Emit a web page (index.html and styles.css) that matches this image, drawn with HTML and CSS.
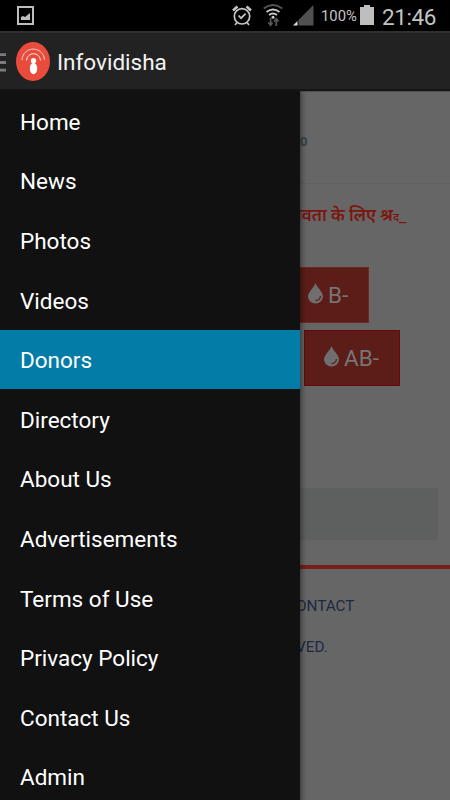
FILE: index.html
```html
<!DOCTYPE html>
<html lang="en">
<head>
<meta charset="utf-8">
<title>Infovidisha</title>
<link rel="stylesheet" href="styles.css">
</head>
<body>
<div class="status">
  <svg class="picture" width="17" height="19" viewBox="0 0 17 19"><path d="M1 1h15v17H1z" fill="none" stroke="#bcbebc" stroke-width="2"/><path d="M4 14v-3l2-1 2 1 5-4v7z" fill="#bcbebc"/></svg>
  <svg class="alarm" width="20" height="21" viewBox="0 0 20 21" fill="none" stroke="#c6c6c6" stroke-width="1.7"><circle cx="10" cy="11.300" r="7.700"/><path d="M1 5.500l4.500-4M19 5.500l-4.500-4" stroke-width="2.600"/><path d="M6.500 10.500l2.600 2.700 4.500-4.500M5 17.500l-2 2.500M15 17.500l2 2.500"/></svg>
  <svg class="wifi" width="20" height="23" viewBox="0 0 20 23" fill="none" stroke="#c6c6c6" stroke-width="1.900"><path d="M.7 4.500Q10-2.500 19.300 4.500" stroke="#555"/><path d="M3.500 8q6.500-5 13 0M6 11q4-3.200 8 0"/><circle cx="10" cy="13.200" r="1.500" fill="#ccc" stroke="none"/><path d="M7.600 14v7M5.300 18.500l2.300 2.800 1.900-2.800M13.300 22v-7M11 17.500l2.300-2.800 2.300 2.800" stroke="#555" stroke-width="1.800"/></svg>
  <svg class="signal" width="21" height="21" viewBox="0 0 21 21"><path d="M20.500 0v20.500h-15V15z" fill="#505050"/><path d="M4.500 16v4.500H0z" fill="#ddd"/></svg>
  <span class="percent">100%</span>
  <svg class="battery" width="14" height="20" viewBox="0 0 14 20"><path d="M0 2h4V0h6v2h4v18H0z" fill="#bebebe"/></svg>
  <span class="clock">21:46</span>
</div>
<header class="bar">
  <svg class="burger" width="6" height="19" viewBox="0 0 6 19"><path d="M0 1.700h6M0 9.500h6M0 17.200h6" stroke="#7c7c7c" stroke-width="2.800"/></svg>
  <svg class="logo" width="34" height="39" viewBox="0 0 34 39"><ellipse cx="17" cy="19.500" rx="17" ry="19.500" fill="#e94b3c"/><g fill="none" stroke="#fff" stroke-width=".9"><path d="M6 18C7 3.500 27.500 3.500 28.500 18" opacity=".8"/><path d="M10.500 18.500C11.500 9.500 23.500 9.500 24.500 18.500"/></g><circle cx="17.500" cy="18.700" r="2.700" fill="#fff"/><ellipse cx="17.500" cy="26.500" rx="3.700" ry="5.700" fill="#fff"/></svg>
  <h1>Infovidisha</h1>
</header>
<main class="stage">
  <div class="page">
    <div class="top"><b>0</b></div>
    <div class="ticker"><span>मानवता के लिए श्र<span class="typing">द</span></span><span class="caret">_</span></div>
    <div class="groups">
      <div class="group first"><svg width="15" height="21" viewBox="0 0 15 21"><path d="M7.500 0C6.500 4 0 9 0 13.500a7.500 7.100 0 0 0 15 0C15 9 8.500 4 7.500 0z" fill="#6f6f6f"/><path d="M12.500 13q-.5 4.500-5 4.500" fill="none" stroke="#5c1d18" stroke-width="1.300"/></svg><span>B-</span></div>
      <div class="group second"><svg width="15" height="21" viewBox="0 0 15 21"><path d="M7.500 0C6.500 4 0 9 0 13.500a7.500 7.100 0 0 0 15 0C15 9 8.500 4 7.500 0z" fill="#6f6f6f"/><path d="M12.500 13q-.5 4.500-5 4.500" fill="none" stroke="#5c1d18" stroke-width="1.300"/></svg><span>AB-</span></div>
    </div>
    <div class="panel"></div>
    <footer><p>CONTACT</p><p class="rights">VED.</p></footer>
  </div>
  <nav class="drawer">
    <a>Home</a><a>News</a><a>Photos</a><a>Videos</a><a class="active">Donors</a><a>Directory</a><a>About Us</a><a>Advertisements</a><a>Terms of Use</a><a>Privacy Policy</a><a>Contact Us</a><a>Admin</a>
  </nav>
</main>
</body>
</html>
```
FILE: styles.css
```css
* { box-sizing: border-box; }
body { margin: 0; width: 450px; height: 800px; overflow: hidden; display: flex; flex-direction: column; background: #000; font-family: Roboto, "Noto Sans", sans-serif; }
svg { display: block; flex: none; }
.status { flex: none; height: 31px; display: flex; align-items: flex-start; color: #c4c4c4; white-space: nowrap; }
.picture { margin: 6px 0 0 17px; }
.alarm { margin: 5px 0 0 198px; }
.wifi { margin: 4px 0 0 11px; }
.signal { margin: 5px 0 0 10px; }
.percent { width: 36px; margin: 7px 0 0 7px; font-size: 14.800px; line-height: 19px; }
.battery { margin: 5px 0 0 3px; }
.clock { margin: 3px 0 0 8px; font-size: 22.500px; letter-spacing: -.4px; line-height: 28px; }
.bar { flex: none; height: 60px; display: flex; align-items: flex-start; background: #222; border-top: 2px solid #303030; border-bottom: 2px solid #151515; }
.burger { margin-top: 20px; }
.logo { margin: 9px 0 0 10px; }
h1 { margin: 14px 0 0 7px; font-size: 22.500px; line-height: 30px; font-weight: 400; color: #f3f3f3; }
.stage { flex: 1; position: relative; overflow: hidden; }
.page { height: 100%; background: #666; border-top: 1px solid #505050; }
.top { height: 92px; padding: 41px 0 0 300px; border-bottom: 1px solid #606060; color: #3a4249; font-size: 13px; line-height: 18px; }
.ticker { width: 408px; height: 83px; padding-top: 18px; display: flex; justify-content: flex-end; white-space: nowrap; color: #7a160f; font-size: 17px; line-height: 26px; font-weight: 600; }
.typing { font-size: 11px; }
.caret { width: 9px; margin-top: 1px; font-weight: 400; }
.groups { height: 221px; display: flex; flex-direction: column; gap: 7px; }
.group { height: 56px; display: flex; align-items: center; background: #5c1d18; border: 1px solid #702821; color: #757575; font-size: 22.500px; gap: 5px; }
.first { width: 79px; margin-left: 290px; padding-left: 17px; }
.second { width: 96px; margin-left: 304px; padding-left: 19px; border-color: #650b06; }
.group svg { margin-top: -3px; }
.group span { margin-top: -1px; }
.panel { width: 438px; height: 52px; background: #5d605f; }
footer { margin-top: 25px; border-top: 4px solid #791e18; padding: 26px 0 0 286px; color: #1c2940; font-size: 15.300px; line-height: 22px; }
footer p { margin: 0 0 19px; }
footer .rights { padding-left: 10px; }
.drawer { position: absolute; top: 0; left: 0; width: 300px; height: 720px; padding-top: .5px; background: #111; box-shadow: 1px 0 6px rgba(0,0,0,.55); }
.drawer a { display: flex; align-items: center; height: 59.600px; padding: 1px 0 0 20px; color: #fff; font-size: 22.500px; }
.drawer .active { background: #037ca7; }
```
